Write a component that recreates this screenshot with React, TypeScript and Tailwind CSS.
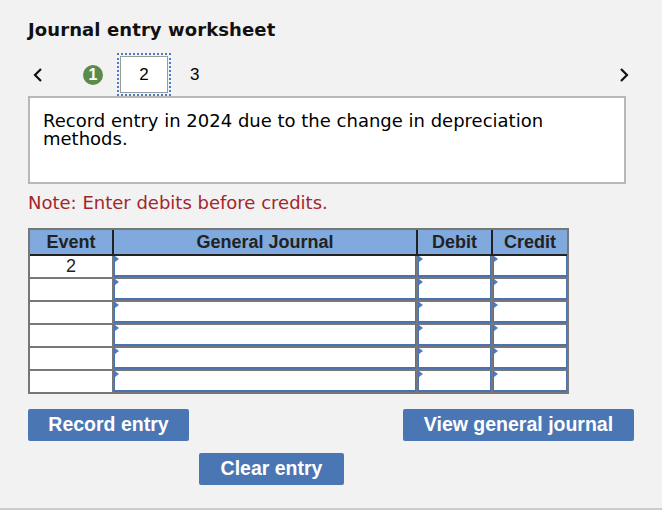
import React from "react";

const Tri = () => (
  <svg className="absolute left-0 top-0" width="5" height="6" viewBox="0 0 5 6">
    <polygon points="0,0 4,3 0,6" fill="#4a7cc7" />
  </svg>
);

const InputCell = ({ w }: { w: string }) => (
  <div className={`${w} h-full border-l-2 border-[#777777] bg-white`}>
    <div className="relative h-full border-x border-b-2 border-[#4a72b0] bg-white">
      <Tri />
    </div>
  </div>
);

export default function App() {
  const rows = ["2", "", "", "", "", ""];
  return (
    <div className="w-[662px] h-[510px] bg-[#f2f2f2] relative overflow-hidden">
      <div className="pl-[28px] pt-[19px]">
        <div
          className="text-[18px] font-bold text-[#111] leading-[22px] tracking-[0.1px]"
          style={{ fontFamily: '"DejaVu Sans", Verdana, sans-serif' }}
        >
          Journal entry worksheet
        </div>
        <div className="flex items-center h-[43px] mt-[12px] w-[604px] relative" style={{ fontFamily: '"Liberation Sans", Arial, sans-serif' }}>
          <svg width="12" height="16" viewBox="0 0 12 16" className="ml-[4px]">
            <polyline points="9,2 3,8 9,14" fill="none" stroke="#111" strokeWidth="2.2" />
          </svg>
          <div className="ml-[39px] w-[20px] h-[20px] rounded-full bg-[#5b8a4c] text-white text-[16px] font-bold flex items-center justify-center leading-none">
            1
          </div>
          <div className="ml-[14px] w-[54px] h-[43px] border-2 border-dotted border-[#4a7cc7] p-[1px]">
            <div className="w-full h-full bg-white border border-[#9a9a9a] flex items-center justify-center text-[17px] text-black">
              2
            </div>
          </div>
          <div className="ml-[19px] text-[17px] text-black">3</div>
          <svg width="12" height="16" viewBox="0 0 12 16" className="ml-auto mr-[2px]">
            <polyline points="3,2 9,8 3,14" fill="none" stroke="#111" strokeWidth="2.2" />
          </svg>
        </div>
        <div
          className="w-[598px] h-[88px] bg-white border-2 border-[#b8b8b8] pl-[13px] pt-[14px] text-[18px] leading-[18px] text-black"
          style={{ fontFamily: '"DejaVu Sans", Verdana, sans-serif' }}
        >
          <div>Record entry in 2024 due to the change in depreciation</div>
          <div>methods.</div>
        </div>
        <div
          className="mt-[8px] text-[18px] leading-[22px] text-[#a3262a]"
          style={{ fontFamily: '"DejaVu Sans", Verdana, sans-serif' }}
        >
          Note: Enter debits before credits.
        </div>
        <div
          className="mt-[14px] w-[541px] border-2 border-[#777777]"
          style={{ fontFamily: '"Liberation Sans", Arial, sans-serif' }}
        >
          <div className="flex h-[26px] bg-[#80a9dd] border-b-2 border-[#222] text-[18px] font-bold text-[#222]">
            <div className="w-[82px] flex items-center justify-center">Event</div>
            <div className="w-[304px] border-l-2 border-[#222] flex items-center justify-center">General Journal</div>
            <div className="w-[75px] border-l-2 border-[#222] flex items-center justify-center">Debit</div>
            <div className="w-[76px] border-l-2 border-[#222] flex items-center justify-center">Credit</div>
          </div>
          {rows.map((v, i) => (
            <div key={i} className={`flex h-[21px] ${i > 0 ? "box-content border-t-2 border-[#777777]" : ""}`}>
              <div className="w-[82px] bg-white flex items-center justify-center text-[18px] text-[#222]">{v}</div>
              <InputCell w="w-[304px]" />
              <InputCell w="w-[75px]" />
              <InputCell w="w-[76px]" />
            </div>
          ))}
        </div>
        <div
          className="flex mt-[15px] w-[606px] justify-between text-[19.5px] font-bold text-white"
          style={{ fontFamily: '"Liberation Sans", Arial, sans-serif' }}
        >
          <div className="w-[161px] h-[32px] bg-[#4a76b4] rounded-[2px] flex items-center justify-center">Record entry</div>
          <div className="w-[231px] h-[32px] bg-[#4a76b4] rounded-[2px] flex items-center justify-center">View general journal</div>
        </div>
        <div
          className="ml-[171px] mt-[12px] w-[145px] h-[32px] bg-[#4a76b4] rounded-[2px] flex items-center justify-center text-[19.5px] font-bold text-white"
          style={{ fontFamily: '"Liberation Sans", Arial, sans-serif' }}
        >
          Clear entry
        </div>
      </div>
      <div className="absolute left-0 right-0 top-[508px] h-[2px] bg-[#cccccc]" />
    </div>
  );
}
